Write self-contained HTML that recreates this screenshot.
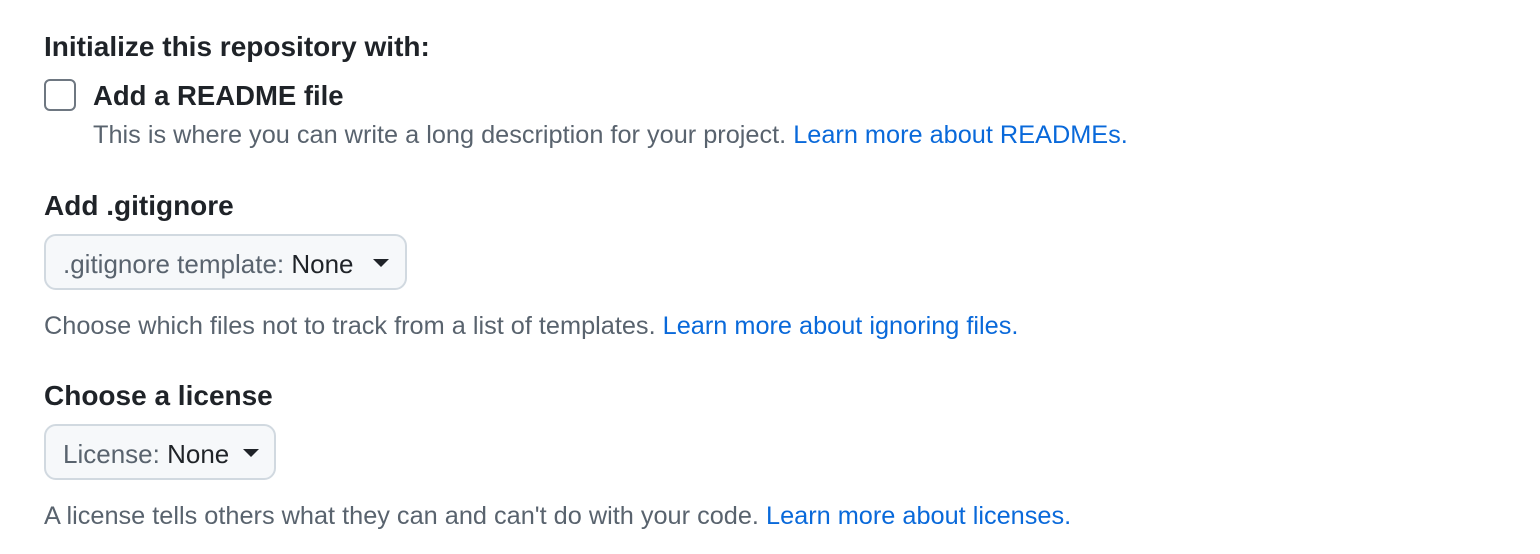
<!DOCTYPE html>
<html><head><style>
body{margin:0;width:1540px;height:554px;background:#fff;font-family:"Liberation Sans",Arial,sans-serif;color:#1f2328;position:relative;overflow:hidden}
.a{position:absolute;white-space:nowrap;line-height:1}
.h{font-size:28px;font-weight:bold}
.d{font-size:25.3px;color:#59636e}
.l{color:#0969da}
.cb{position:absolute;left:44px;top:79px;width:28px;height:28px;border:2px solid #6e7781;border-radius:6px;background:#fff}
.btn{position:absolute;left:44px;height:56px;border:2px solid #d1d9e0;border-radius:12px;background:#f6f8fa;box-sizing:border-box}
.btn span{position:absolute;top:13px;left:17px;font-size:26px;color:#59636e;white-space:nowrap}
.btn b{font-weight:normal;color:#1f2328}
.caret{position:absolute;top:23px;width:0;height:0;border-left:8px solid transparent;border-right:8px solid transparent;border-top:8px solid #1f2328}
</style></head><body>
<div class="a h" style="left:44px;top:33px">Initialize this repository with:</div>
<div class="cb"></div>
<div class="a h" style="left:93px;top:82px;font-size:27.5px">Add a README file</div>
<div class="a d" style="left:93px;top:123px">This is where you can write a long description for your project. <span class="l">Learn more about READMEs.</span></div>
<div class="a h" style="left:44px;top:192px">Add .gitignore</div>
<div class="btn" style="top:234px;width:363px"><span>.gitignore template: <b>None</b></span><div class="caret" style="left:327px"></div></div>
<div class="a d" style="left:44px;top:314px">Choose which files not to track from a list of templates. <span class="l">Learn more about ignoring files.</span></div>
<div class="a h" style="left:44px;top:382px">Choose a license</div>
<div class="btn" style="top:424px;width:232px"><span>License: <b>None</b></span><div class="caret" style="left:197px"></div></div>
<div class="a d" style="left:44px;top:504px">A license tells others what they can and can't do with your code. <span class="l">Learn more about licenses.</span></div>
</body></html>
